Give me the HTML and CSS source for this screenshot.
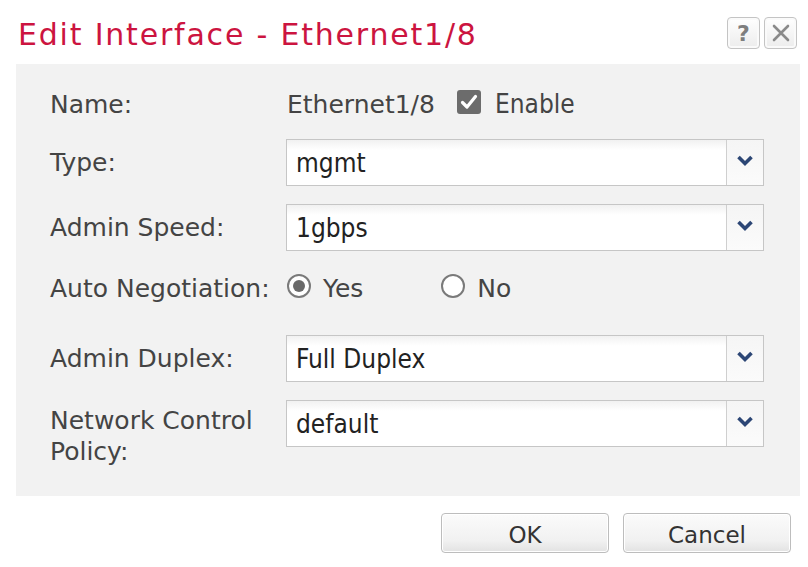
FILE: index.html
```html
<!DOCTYPE html>
<html>
<head>
<meta charset="utf-8">
<link rel="stylesheet" href="styles.css">
</head>
<body>
<div class="dialog">
  <div class="header">
    <h1 class="title">Edit Interface - Ethernet1/8</h1>
    <div class="tools">
      <span class="tool">?</span>
      <span class="tool tool-x">
        <svg width="20" height="20" viewBox="0 0 20 20"><path d="M3 3 L17 17 M17 3 L3 17" stroke="#8a8a8a" stroke-width="2.6" stroke-linecap="round"/></svg>
      </span>
    </div>
  </div>
  <div class="panel">
    <div class="row row-name">
      <div class="label">Name:</div>
      <div class="value">
        <span class="name-text">Ethernet1/8</span>
        <span class="checkbox">
          <svg width="24" height="24" viewBox="0 0 24 24"><path d="M5.5 12.5 L10 17 L18.5 6.5" fill="none" stroke="#fff" stroke-width="3.2" stroke-linecap="round" stroke-linejoin="round"/></svg>
        </span>
        <span class="check-label">Enable</span>
      </div>
    </div>
    <div class="row row-type">
      <div class="label">Type:</div>
      <div class="select"><span class="select-text">mgmt</span><span class="select-btn"><svg width="16" height="12" viewBox="0 0 16 12"><path d="M1.5 2 L8 8.5 L14.5 2" fill="none" stroke="#2c4675" stroke-width="3.6"/></svg></span></div>
    </div>
    <div class="row row-speed">
      <div class="label">Admin Speed:</div>
      <div class="select"><span class="select-text">1gbps</span><span class="select-btn"><svg width="16" height="12" viewBox="0 0 16 12"><path d="M1.5 2 L8 8.5 L14.5 2" fill="none" stroke="#2c4675" stroke-width="3.6"/></svg></span></div>
    </div>
    <div class="row row-auto">
      <div class="label">Auto Negotiation:</div>
      <div class="value radios">
        <span class="radio radio-on"><span class="dot"></span></span>
        <span class="radio-label">Yes</span>
        <span class="radio"></span>
        <span class="radio-label">No</span>
      </div>
    </div>
    <div class="row row-duplex">
      <div class="label">Admin Duplex:</div>
      <div class="select"><span class="select-text">Full Duplex</span><span class="select-btn"><svg width="16" height="12" viewBox="0 0 16 12"><path d="M1.5 2 L8 8.5 L14.5 2" fill="none" stroke="#2c4675" stroke-width="3.6"/></svg></span></div>
    </div>
    <div class="row row-policy">
      <div class="label label-two">Network Control<br>Policy:</div>
      <div class="select"><span class="select-text">default</span><span class="select-btn"><svg width="16" height="12" viewBox="0 0 16 12"><path d="M1.5 2 L8 8.5 L14.5 2" fill="none" stroke="#2c4675" stroke-width="3.6"/></svg></span></div>
    </div>
  </div>
  <div class="footer">
    <button class="btn btn-ok">OK</button>
    <button class="btn btn-cancel">Cancel</button>
  </div>
</div>
</body>
</html>
```

FILE: styles.css
```css
html, body {
  margin: 0;
  padding: 0;
  background: #ffffff;
}
body {
  font-family: "DejaVu Sans", sans-serif;
  color: #3a3a3a;
  width: 808px;
  height: 567px;
  overflow: hidden;
}
.dialog {
  display: flex;
  flex-direction: column;
}
.header {
  display: flex;
  align-items: flex-start;
  justify-content: space-between;
  height: 64px;
  padding-left: 18px;
  padding-right: 11px;
  box-sizing: border-box;
}
.title {
  margin: 0;
  margin-top: 15px;
  font-family: "DejaVu Sans", sans-serif;
  font-weight: normal;
  font-size: 30px;
  line-height: 40px;
  color: #cc1440;
  letter-spacing: 1.8px;
}
.tools {
  display: flex;
  gap: 4px;
  margin-top: 17px;
}
.tool {
  width: 33px;
  height: 32px;
  box-sizing: border-box;
  border: 1px solid #c4c4c4;
  border-radius: 4px;
  background: linear-gradient(#ffffff, #ececec);
  display: flex;
  align-items: center;
  justify-content: center;
  font-family: "DejaVu Sans", sans-serif;
  font-weight: bold;
  font-size: 22px;
  color: #7e7e7e;
  box-shadow: inset 0 0 0 2px #fafafa;
}
.panel {
  margin-left: 16px;
  width: 784px;
  height: 432px;
  background: #f2f2f2;
  box-sizing: border-box;
  padding: 16px 36px 0 34px;
  display: flex;
  flex-direction: column;
}
.row {
  display: flex;
  align-items: center;
}
.label {
  width: 236px;
  flex: none;
  font-size: 25px;
  color: #444;
}
.row-name { height: 48px; }
.row-type { margin-top: 11px; }
.row-speed { margin-top: 18px; }
.row-auto { height: 48px; margin-top: 13px; }
.row-duplex { margin-top: 23px; }
.row-policy { margin-top: 18px; align-items: flex-start; }
.label-two {
  line-height: 31px;
  margin-top: 5px;
}
.value {
  display: flex;
  align-items: center;
  font-size: 25px;
  color: #444;
}
.name-text {
  margin-left: 1px;
}
.checkbox {
  width: 24px;
  height: 24px;
  border-radius: 3px;
  background: #6c6c6c;
  display: inline-flex;
  margin-left: 22px;
  margin-top: -4px;
}
.check-label {
  margin-left: 14px;
  font-family: "DejaVu Sans Condensed", "DejaVu Sans", sans-serif;
  font-size: 26px;
  color: #444;
}
.select {
  width: 478px;
  height: 47px;
  box-sizing: border-box;
  border: 1px solid #c6c6c6;
  background: linear-gradient(#f1f1f1, #ffffff 22%);
  display: flex;
  align-items: center;
}
.select-text {
  flex: 1;
  padding-left: 9px;
  font-family: "DejaVu Sans Condensed", "DejaVu Sans", sans-serif;
  font-size: 26px;
  color: #222;
}
.select-btn {
  width: 37px;
  height: 100%;
  box-sizing: border-box;
  border-left: 1px solid #cfcfcf;
  background: linear-gradient(#f5f5f5, #fbfbfb);
  display: flex;
  align-items: center;
  justify-content: center;
  padding-bottom: 4px;
}
.radios {
  margin-left: 1px;
}
.radio {
  width: 24px;
  height: 24px;
  box-sizing: border-box;
  border: 2px solid #7a7a7a;
  border-radius: 50%;
  background: #fff;
  display: inline-flex;
  align-items: center;
  justify-content: center;
  margin-top: -4px;
}
.dot {
  width: 12px;
  height: 12px;
  border-radius: 50%;
  background: #6a6a6a;
}
.radio-label {
  margin-left: 12px;
  font-size: 25px;
  color: #444;
}
.radio-label:nth-child(2) {
  margin-right: 78px;
}
.footer {
  display: flex;
  justify-content: flex-end;
  gap: 14px;
  padding-top: 17px;
  padding-right: 17px;
}
.btn {
  width: 168px;
  height: 40px;
  box-sizing: border-box;
  border: 1px solid #bdbdbd;
  border-radius: 4px;
  background: linear-gradient(#fbfbfb 0%, #f1f1f1 70%, #e2e2e2 100%);
  font-family: "DejaVu Sans", sans-serif;
  font-size: 23px;
  color: #333;
  padding: 4px 0 0 0;
  box-shadow: inset 0 0 0 1px #fff;
}
```
